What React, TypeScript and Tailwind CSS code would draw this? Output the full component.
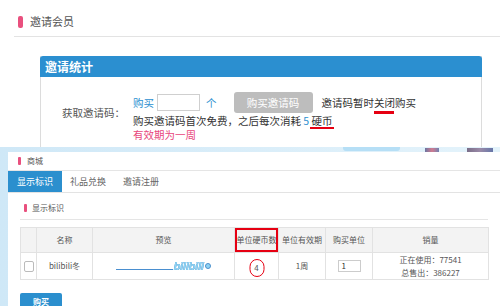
import React from "react";

function InviteSection() {
  return (
    <div className="h-[147px] overflow-hidden bg-white">
      {/* page title */}
      <div className="ml-[14px] h-[37px] pt-[7px] flex items-center border-b border-[#e3e3e3]">
        <span className="ml-[4px] w-[5px] h-[12px] rounded-[2px] bg-[#e9507e]" />
        <span className="ml-[7px] text-[11px] text-[#555]">邀请会员</span>
      </div>

      {/* stats panel */}
      <div className="ml-[40px] mt-[19px] w-[442px] h-[200px] border-x border-[#dcdcdc]">
        <div className="-mx-px h-[21px] bg-[#2b8fd0] rounded-t-[3px] px-[5px] flex items-center text-white font-bold text-[12px]">
          邀请统计
        </div>
        <div className="flex pt-[15px]">
          <div className="w-[92px] pl-[21px] pt-[14px] text-[10.5px] leading-[13px] text-[#555]">获取邀请码：</div>
          <div className="flex flex-col text-[10.5px] text-[#333]">
            <div className="flex items-center h-[21px]">
              <span className="text-[#2b8fd0]">购买</span>
              <span className="ml-[3px] w-[43px] h-[17px] border border-[#cfcfcf] bg-white" />
              <span className="ml-[6px] text-[#2b8fd0]">个</span>
              <button className="ml-[17px] w-[79px] h-[21px] rounded-[3px] bg-[#bdbdbd] text-white text-[10.5px]">
                购买邀请码
              </button>
              <span className="ml-[9px]">
                邀请码暂时
                <span className="relative">
                  关闭
                  <span className="absolute left-0 top-[16px] w-[20px] h-[3px] bg-[#e60012]" />
                </span>
                购买
              </span>
            </div>
            <div className="mt-[2px] leading-[12px]">
              购买邀请码首次免费，之后每次消耗 <span className="text-[#2b8fd0]">5</span>{" "}
              <span className="relative">
                硬币
                <span className="absolute left-[-2px] top-[14px] w-[24px] h-[2px] bg-[#e60012]" />
              </span>
            </div>
            <div className="mt-[1px] leading-[13px] text-[#e8467c]">有效期为一周</div>
          </div>
        </div>
      </div>
    </div>
  );
}

function ShopSection() {
  const th = "border border-[#e2e2e2] h-[25px] p-0 text-center font-normal text-[8px] text-[#555]";
  const td = "border border-[#e2e2e2] h-[25px] p-0 text-center text-[8px] text-[#555]";
  return (
    <div className="relative h-[159px] bg-gradient-to-r from-[#cfe8f7] to-[#e4f3fb] pl-[8px] pt-[5px]">
      {/* bits of the banner image peeking out */}
      <span className="absolute left-[343px] top-0 w-[57px] h-[4px] rounded-b-[3px] bg-[#b6dff6]" />
      <span className="absolute left-[425px] top-[1px] w-[14px] h-[4px] bg-gradient-to-r from-[#6a74a0] via-[#d07a90] to-[#7080b0]" />
      <span className="absolute left-[467px] top-[1px] w-[26px] h-[4px] bg-gradient-to-r from-[#7a6e88] via-[#9a8aa8] to-[#6676a8]" />

      <div className="h-full bg-white">
        <div className="h-[19px] flex items-center border-b border-[#e5e5e5] pl-[10px]">
          <span className="w-[3px] h-[8px] rounded-[1px] bg-[#e9507e]" />
          <span className="ml-[6px] text-[8px] text-[#555]">商城</span>
        </div>

        <div className="flex h-[22px] border-b border-[#e3e3e3] text-[9px]">
          <div className="px-[9px] flex items-center bg-[#2b8fce] text-white">显示标识</div>
          <div className="pl-[8px] pr-[9px] flex items-center text-[#666]">礼品兑换</div>
          <div className="px-[8px] flex items-center text-[#666]">邀请注册</div>
        </div>

        <div className="ml-[12px] w-[468px]">
          <div className="h-[27px] pt-[4px] flex items-center border-b border-[#e5e5e5]">
            <span className="ml-[4px] w-[3px] h-[8px] rounded-[1px] bg-[#e9507e]" />
            <span className="ml-[5px] text-[8px] text-[#555]">显示标识</span>
          </div>

          <table className="mt-[7px] w-[468px] table-fixed border-collapse">
            <colgroup>
              <col className="w-[16px]" />
              <col className="w-[56px]" />
              <col className="w-[142px]" />
              <col className="w-[44px]" />
              <col className="w-[47px]" />
              <col className="w-[47px]" />
              <col className="w-[116px]" />
            </colgroup>
            <thead>
              <tr className="bg-[#f3f3f3]">
                <th className={th}></th>
                <th className={th}>名称</th>
                <th className={th}>预览</th>
                <th className={`${th} relative`}>
                  单位硬币数
                  <span className="absolute inset-0 border-2 border-[#e60012]" />
                </th>
                <th className={th}>单位有效期</th>
                <th className={th}>购买单位</th>
                <th className={th}>销量</th>
              </tr>
            </thead>
            <tbody>
              <tr>
                <td className={td}>
                  <span className="inline-block align-middle w-[10px] h-[11px] border border-[#bbb] rounded-[2px] bg-white" />
                </td>
                <td className={td}>bilibili冬</td>
                <td className={td}>
                  <div className="flex items-center justify-center">
                    <span className="mt-[7px] w-[57px] h-px bg-[#4a8fd0]" />
                    <span className="font-['DejaVu_Sans',sans-serif] text-[10px] font-bold italic tracking-[-0.6px] text-[#8fd3f3] drop-shadow-[0_0_0.6px_#2f78bd]">
                      bilibili
                    </span>
                    <span className="ml-px w-[6px] h-[6px] rounded-full bg-[#8fd3f3] border border-[#4b8fcc]" />
                  </div>
                </td>
                <td className={`${td} relative`}>
                  <span className="relative top-[2px]">4</span>
                  <span className="absolute left-1/2 -translate-x-1/2 top-[6px] w-[15px] h-[18px] rounded-full border-[1.5px] border-[#e60012]" />
                </td>
                <td className={td}>1周</td>
                <td className={td}>
                  <span className="inline-flex items-center align-middle w-[23px] h-[12px] border border-[#ccc] pl-[3px] text-[8px] text-[#333]">
                    1
                  </span>
                </td>
                <td className={`${td} leading-[13px]`}>
                  <div>正在使用：77541</div>
                  <div>总售出：386227</div>
                </td>
              </tr>
            </tbody>
          </table>

          <button className="mt-[13px] w-[42px] h-[17px] rounded-[2px] bg-[#2b8fce] text-white text-[8px] font-bold flex items-center justify-center">
            购买
          </button>
        </div>
      </div>
    </div>
  );
}

export default function App() {
  return (
    <div className="w-[500px] h-[306px] overflow-hidden bg-white font-['Noto_Sans_CJK_SC','Noto_Sans',sans-serif]">
      <InviteSection />
      <ShopSection />
    </div>
  );
}
